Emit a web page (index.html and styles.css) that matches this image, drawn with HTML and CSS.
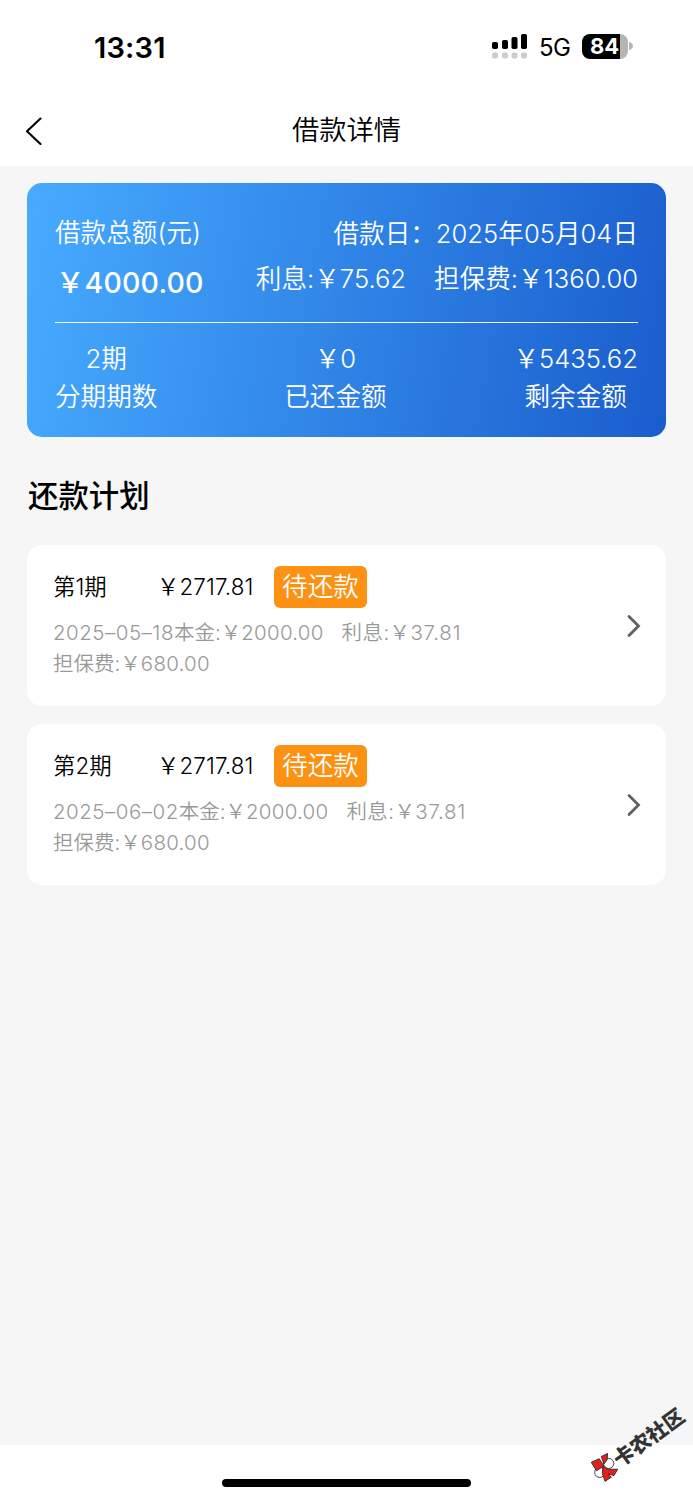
FILE: index.html
```
<!DOCTYPE html>
<html lang="zh-CN">
<head>
<meta charset="utf-8">
<title>借款详情</title>
<link rel="stylesheet" href="styles.css">
</head>
<body>
<div class="screen">
  <header class="status">
    <span class="time">13:31</span>
    <div class="indicators">
      <svg class="signal" width="36" height="25" viewBox="0 0 36 25">
        <g fill="#000"><rect x="0" y="8" width="6" height="7" rx="1.8"/><rect x="10" y="6" width="6" height="9" rx="1.8"/><rect x="19.5" y="3" width="6" height="12" rx="1.8"/><rect x="29" y="0" width="6" height="15" rx="1.8"/></g>
        <g fill="#ccc"><rect x="0" y="18.5" width="6" height="6" rx="2"/><rect x="10" y="18.5" width="6" height="6" rx="2"/><rect x="19.5" y="18.5" width="6" height="6" rx="2"/><rect x="29" y="18.5" width="6" height="6" rx="2"/></g>
      </svg>
      <span class="network">5G</span>
      <div class="battery"><span class="level">84</span></div>
      <svg class="cap" width="4" height="8" viewBox="0 0 4 8"><path d="M0 0Q4 1 4 4T0 8Z" fill="#b5b5b5"/></svg>
    </div>
  </header>
  <nav class="nav">
    <svg class="back" width="18" height="30" viewBox="0 0 18 30"><path d="M15.5 2.5L2 15.3L15.5 28" fill="none" stroke="#000" stroke-width="2.1" stroke-linecap="round" stroke-linejoin="round"/></svg>
    <h1 class="title">借款详情</h1>
  </nav>
  <main class="content">
    <section class="summary">
      <div class="overview">
        <div class="total">
          <div class="total-label">借款总额(元)</div>
          <div class="total-value">￥<span class="num">4000.00</span></div>
        </div>
        <div class="terms">
          <div>借款日：<span class="num">2025</span>年<span class="num">05</span>月<span class="num">04</span>日</div>
          <div class="fees"><span>利息:￥<span class="num">75.62</span></span><span>担保费:￥<span class="num">1360.00</span></span></div>
        </div>
      </div>
      <div class="stats">
        <div class="stat"><div><span class="num">2</span>期</div><div>分期期数</div></div>
        <div class="stat"><div>￥<span class="num">0</span></div><div>已还金额</div></div>
        <div class="stat"><div>￥<span class="num">5435.62</span></div><div>剩余金额</div></div>
      </div>
    </section>
    <h2 class="heading">还款计划</h2>
    <section class="plan">
      <div class="plan-body">
        <div class="plan-head"><span class="period">第1期</span><span class="amount">￥<span class="num">2717.81</span></span><span class="badge">待还款</span></div>
        <div class="detail"><span class="date">2025–05–18</span>本金:￥<span class="num">2000.00</span><span class="interest">利息:￥<span class="num">37.81</span></span></div>
        <div class="detail">担保费:￥<span class="num">680.00</span></div>
      </div>
      <svg class="arrow" width="16" height="24" viewBox="0 0 16 24"><path d="M3 2.5L12.5 12L3 21.5" fill="none" stroke="#606060" stroke-width="2.8" stroke-linecap="round"/></svg>
    </section>
    <section class="plan">
      <div class="plan-body">
        <div class="plan-head"><span class="period">第2期</span><span class="amount">￥<span class="num">2717.81</span></span><span class="badge">待还款</span></div>
        <div class="detail"><span class="date">2025–06–02</span>本金:￥<span class="num">2000.00</span><span class="interest">利息:￥<span class="num">37.81</span></span></div>
        <div class="detail">担保费:￥<span class="num">680.00</span></div>
      </div>
      <svg class="arrow" width="16" height="24" viewBox="0 0 16 24"><path d="M3 2.5L12.5 12L3 21.5" fill="none" stroke="#606060" stroke-width="2.8" stroke-linecap="round"/></svg>
    </section>
  </main>
  <footer class="footer"><div class="home"></div></footer>
  <svg class="mark" width="36" height="36" viewBox="0 0 36 36" stroke="#222" stroke-width=".8">
    <g fill="#fff"><circle cx="21.5" cy="16.5" r="4.8"/><circle cx="13" cy="25" r="4.8"/></g>
    <g fill="#e3211b"><path d="M5 15.5L12.5 12L17 19L10 23.5z"/><path d="M14.5 10L20.5 7L20 13L17 17z"/><path d="M16 19.5L21 22L30 22L26.5 28L21 26.5L24 29.5L18 33.5L15.5 26z"/></g>
  </svg>
  <div class="watermark">卡农社区</div>
</div>
</body>
</html>
```
FILE: styles.css
```
* { box-sizing: border-box; }
body { margin: 0; background: #fff; color: #000; font-family: Inter, "Noto Sans CJK SC", sans-serif; font-weight: 350; }
.screen { position: relative; width: 693px; height: 1500px; display: flex; flex-direction: column; overflow: hidden; white-space: nowrap; }
.status { height: 96px; display: flex; justify-content: space-between; padding: 0 60px 0 94px; }
.time { font-size: 29px; font-weight: 600; line-height: 34px; margin-top: 31px; letter-spacing: .2px; }
.indicators { display: flex; align-items: center; height: 26px; margin-top: 33px; }
.signal { margin-right: 11px; }
.network { font-size: 24px; font-weight: 400; line-height: 26px; width: 43px; letter-spacing: -.5px; padding-top: 4px; }
.battery { width: 46px; height: 25px; border-radius: 8px; background: linear-gradient(90deg, #000 38px, #b5b5b5 38px); color: #fff; }
.level { display: block; padding-left: 8px; font-size: 22px; font-weight: 700; line-height: 25px; }
.cap { margin-left: 1px; }
.nav { height: 70px; display: grid; grid-template-columns: 60px 1fr 60px; align-items: center; }
.back { margin-left: 25px; }
.title { margin: 0; text-align: center; font-size: 27.3px; font-weight: 350; line-height: 40px; }
.content { flex: 1; background: #f6f6f6; padding: 17px 27px 0; }
.summary { height: 254px; border-radius: 15px; padding: 31px 28px 0; color: #fff; font-size: 25.6px; background: linear-gradient(100deg, #47abff, #195dcd); }
.overview { height: 109px; display: flex; justify-content: space-between; border-bottom: 1px solid #fff; }
.num { font-weight: 300; }
.total-label { line-height: 38px; }
.total-value { font-size: 28.5px; font-weight: 500; line-height: 40px; margin: 11px 0 0 1px; }
.total-value .num { font-weight: 500; letter-spacing: .2px; }
.terms { text-align: right; line-height: 38px; padding-top: 1px; }
.fees { display: flex; gap: 28px; justify-content: flex-end; margin-top: 7px; }
.stats { display: flex; justify-content: space-between; padding-top: 17px; }
.stat { text-align: center; line-height: 38px; }
.heading { margin: 36px 0 0 1px; font-size: 30.4px; font-weight: 500; line-height: 46px; }
.plan { height: 161px; margin-top: 26px; background: #fff; border-radius: 15px; display: flex; justify-content: space-between; align-items: center; padding: 0 24px 0 26px; }
.plan + .plan { margin-top: 18px; }
.plan-body { align-self: flex-start; padding-top: 21px; }
.plan-head { display: flex; height: 42px; align-items: center; font-size: 22.4px; margin-bottom: 10px; }
.period, .amount { line-height: 42px; }
.period { width: 104px; }
.amount { width: 117px; }
.amount .num { font-weight: 350; letter-spacing: .15px; }
.badge { width: 93px; height: 42px; border-radius: 6px; background: #fc9114; color: #fff; text-align: center; font-size: 25.6px; line-height: 42px; }
.detail { font-size: 20.5px; line-height: 30.6px; color: #999; }
.detail .num { letter-spacing: .25px; }
.date { font-weight: 300; letter-spacing: .5px; }
.interest { margin-left: 18px; letter-spacing: .4px; }
.interest .num { letter-spacing: .7px; }
.footer { height: 55px; background: #fff; display: flex; justify-content: center; padding-top: 34px; }
.home { width: 249px; height: 8px; border-radius: 4px; background: #000; }
.mark { position: absolute; left: 586px; top: 1446px; width: 38px; height: 38px; }
.watermark { position: absolute; left: 608px; top: 1425px; transform: rotate(-36deg); color: #333; font-size: 20.5px; font-weight: 900; line-height: 26px; }
```
